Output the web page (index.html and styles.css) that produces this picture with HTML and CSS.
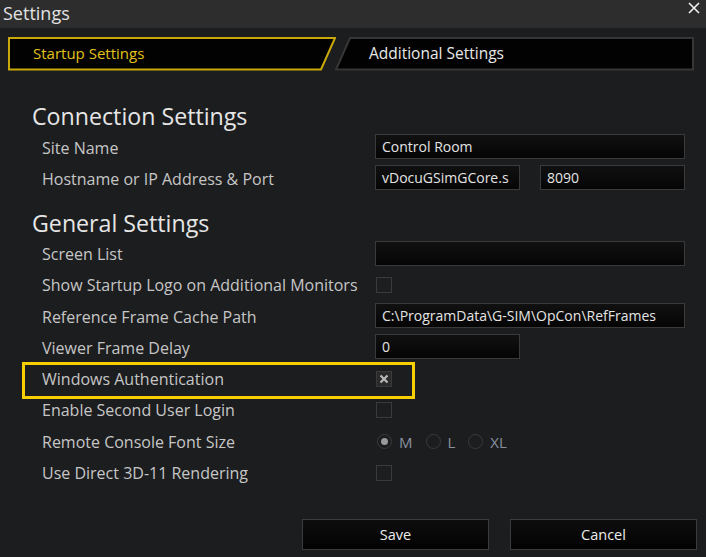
FILE: index.html
```html
<!DOCTYPE html>
<html lang="en">
<head>
    <meta charset="UTF-8">
    <title>Settings</title>
    <link rel="stylesheet" href="styles.css">
</head>
<body>
    <div class="window">
        <div class="titlebar">
            <span class="title">Settings</span>
            <svg class="close" width="12" height="12" viewBox="0 0 12 12">
                <path d="M1 1 L11 11 M11 1 L1 11" stroke="#f0f0f0" stroke-width="1.6" fill="none"/>
            </svg>
        </div>

        <div class="tabs">
            <div class="tab active">
                <svg class="tab-shape" width="328" height="34" viewBox="0 0 328 34">
                    <polygon points="1,1 327,1 313,32.5 1,32.5" fill="#020202" stroke="#c9a80a" stroke-width="2"/>
                </svg>
                <span class="tab-label">Startup Settings</span>
            </div>
            <div class="tab">
                <svg class="tab-shape" width="360" height="34" viewBox="0 0 360 34">
                    <polygon points="15,1 358,1 358,32.5 1,32.5" fill="#020202" stroke="#363636" stroke-width="2"/>
                </svg>
                <span class="tab-label">Additional Settings</span>
            </div>
        </div>

        <div class="content">
            <h2>Connection Settings</h2>
            <div class="rows">
                <div class="row">
                    <label>Site Name</label>
                    <div class="field"><div class="input wide">Control Room</div></div>
                </div>
                <div class="row">
                    <label>Hostname or IP Address &amp; Port</label>
                    <div class="field">
                        <div class="input half">vDocuGSimGCore.s</div>
                        <div class="input half">8090</div>
                    </div>
                </div>
            </div>

            <h2 class="second">General Settings</h2>
            <div class="rows">
                <div class="row">
                    <label>Screen List</label>
                    <div class="field"><div class="input wide"></div></div>
                </div>
                <div class="row">
                    <label>Show Startup Logo on Additional Monitors</label>
                    <div class="field"><span class="check"></span></div>
                </div>
                <div class="row">
                    <label>Reference Frame Cache Path</label>
                    <div class="field"><div class="input wide">C:\ProgramData\G-SIM\OpCon\RefFrames</div></div>
                </div>
                <div class="row">
                    <label>Viewer Frame Delay</label>
                    <div class="field"><div class="input half">0</div></div>
                </div>
                <div class="row highlight">
                    <label>Windows Authentication</label>
                    <div class="field">
                        <span class="check checked">
                            <svg width="10" height="10" viewBox="0 0 10 10">
                                <path d="M1.5 1.5 L8.5 8.5 M8.5 1.5 L1.5 8.5" stroke="#b8b8b8" stroke-width="2.2" fill="none"/>
                            </svg>
                        </span>
                    </div>
                </div>
                <div class="row">
                    <label>Enable Second User Login</label>
                    <div class="field"><span class="check"></span></div>
                </div>
                <div class="row">
                    <label>Remote Console Font Size</label>
                    <div class="field radios">
                        <span class="radio on"></span><span class="radio-text">M</span>
                        <span class="radio"></span><span class="radio-text">L</span>
                        <span class="radio"></span><span class="radio-text">XL</span>
                    </div>
                </div>
                <div class="row">
                    <label>Use Direct 3D-11 Rendering</label>
                    <div class="field"><span class="check"></span></div>
                </div>
            </div>
        </div>

        <div class="buttons">
            <button type="button">Save</button>
            <button type="button">Cancel</button>
        </div>
    </div>
</body>
</html>
```

FILE: styles.css
```css
body {
    margin: 0;
    background: #1c1d1f;
    font-family: "Open Sans", "Noto Sans", sans-serif;
    color: #c9c9c9;
}

.window {
    width: 706px;
    height: 557px;
    background: #1c1d1f;
    overflow: hidden;
}

.titlebar {
    height: 28px;
    background: #2d2d2d;
    display: flex;
    align-items: center;
    justify-content: space-between;
    padding: 0 6px 0 3px;
}

.title {
    font-size: 18px;
    color: #e2e2e2;
    margin-top: -2px;
}

.close {
    margin-top: -12px;
}

.tabs {
    display: flex;
    padding: 9px 0 0 8px;
    height: 34px;
}

.tab {
    position: relative;
    height: 34px;
    display: flex;
    align-items: center;
    font-size: 15px;
    color: #e8e8e8;
}

.tab.active {
    width: 328px;
    padding-left: 25px;
    box-sizing: border-box;
    color: #e3c21a;
}

.tab:not(.active) {
    width: 360px;
    margin-left: -1px;
    padding-left: 34px;
    box-sizing: border-box;
    font-size: 15.5px;
}

.tab-shape {
    position: absolute;
    left: 0;
    top: 0;
}

.tab-label {
    position: relative;
    margin-top: -2px;
}

.content {
    padding-top: 29px;
}

h2 {
    margin: 0 0 0 32px;
    font-size: 23.2px;
    font-weight: normal;
    line-height: 32px;
    color: #e6e6e6;
}

h2.second {
    margin-top: 12px;
}

.rows {
    display: grid;
    grid-auto-rows: 31.25px;
}

.row {
    position: relative;
    display: grid;
    grid-template-columns: 375px 1fr;
    align-items: center;
}

.row label {
    padding-left: 42px;
    font-size: 16px;
    color: #c6c6c6;
    white-space: nowrap;
}

.highlight::after {
    content: "";
    position: absolute;
    left: 22px;
    top: -2px;
    width: 393px;
    height: 37px;
    box-sizing: border-box;
    border: 3px solid #f7cf00;
}

.field {
    display: flex;
    align-items: center;
    gap: 20px;
    margin-top: -2px;
}

.input {
    height: 25px;
    box-sizing: border-box;
    border: 1px solid #3a3a3a;
    background: linear-gradient(#111, #050505);
    color: #e4e4e4;
    font-size: 14px;
    line-height: 23px;
    padding-left: 6px;
    white-space: nowrap;
    overflow: hidden;
}

.input.wide {
    width: 310px;
}

.input.half {
    width: 145px;
}

.check {
    width: 16px;
    height: 16px;
    box-sizing: border-box;
    border: 1px solid #3a3a3a;
    background: #1d1e20;
    margin: 2px 0 0 1px;
    display: flex;
    align-items: center;
    justify-content: center;
}

.check.checked {
    background: #2a2a2a;
}

.radios {
    gap: 0;
    margin-top: 0;
}

.radio {
    width: 15px;
    height: 15px;
    box-sizing: border-box;
    border: 1px solid #3a3a3a;
    border-radius: 50%;
    margin-left: 2px;
    display: flex;
    align-items: center;
    justify-content: center;
}

.radio.on::after {
    content: "";
    width: 7px;
    height: 7px;
    border-radius: 50%;
    background: #9a9a9a;
}

.radio-text {
    font-size: 15px;
    color: #8a919c;
    margin: 0 11px 0 7px;
}

.buttons {
    display: flex;
    justify-content: flex-end;
    gap: 21px;
    padding-right: 9px;
    margin-top: 30px;
}

.buttons button {
    width: 187px;
    height: 31px;
    background: linear-gradient(#0d0d0d, #030303);
    border: 1px solid #3c3c3c;
    color: #ececec;
    font-family: "Open Sans", "Noto Sans", sans-serif;
    font-size: 14.5px;
    cursor: pointer;
}
```
